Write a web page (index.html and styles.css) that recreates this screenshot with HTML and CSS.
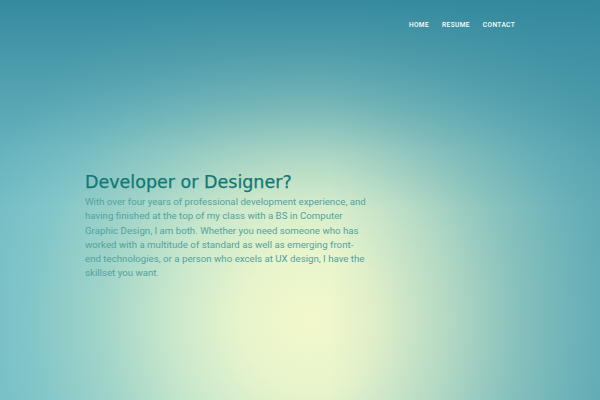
FILE: index.html
```html
<!DOCTYPE html>
<html lang="en">
<head>
<meta charset="utf-8">
<title>Developer or Designer?</title>
<link rel="stylesheet" href="styles.css">
</head>
<body>
<div class="hero">
  <div class="container">
    <nav class="nav">
      <a href="#" class="nav-link">Home</a>
      <a href="#" class="nav-link">Resume</a>
      <a href="#" class="nav-link">Contact</a>
    </nav>
    <section class="intro">
      <h1 class="title">Developer or Designer?</h1>
      <p class="lead">With over four years of professional development experience, and having finished at the top of my class with a BS in Computer Graphic Design, I am both. Whether you need someone who has worked with a multitude of standard as well as emerging front-end technologies, or a person who excels at UX design, I have the skillset you want.</p>
    </section>
  </div>
</div>
</body>
</html>
```
FILE: styles.css
```css
html, body {
  margin: 0;
  padding: 0;
  height: 100%;
}
body {
  font-family: Roboto, "Open Sans", sans-serif;
}
.hero {
  height: 400px;
  overflow: hidden;
  background:
    linear-gradient(to bottom, rgba(48,133,154,0.9) 0%, rgba(48,133,154,0.55) 18%, rgba(48,133,154,0.15) 38%, rgba(48,133,154,0) 52%),
    linear-gradient(to right, rgba(40,120,140,0) 55%, rgba(40,120,140,0.3) 100%),
    radial-gradient(ellipse 350px 370px at 310px 320px,
      #f3f8cb 0%, #e7f4cc 20%, #c8e7cc 40%, #a0d4c9 60%, #82c6c9 80%, #70bbc4 100%);
  background-color: #70bbc4;
}
.container {
  width: 430px;
  margin: 0 auto;
}
.nav {
  display: flex;
  justify-content: flex-end;
  gap: 13px;
  padding-top: 21px;
}
.nav-link {
  color: #ffffff;
  text-decoration: none;
  text-transform: uppercase;
  font-size: 6.6px;
  font-weight: 500;
  letter-spacing: 0.35px;
  line-height: 9px;
}
.intro {
  padding-top: 142px;
  width: 284px;
}
.title {
  margin: 0;
  font-family: "DejaVu Sans", Roboto, sans-serif;
  font-size: 17.5px;
  font-weight: 400;
  line-height: 20px;
  color: #117876;
  -webkit-text-stroke: 0.25px #117876;
}
.lead {
  margin: 3px 0 0;
  font-size: 9.7px;
  font-weight: 400;
  line-height: 14.3px;
  color: #52a29e;
}
```
